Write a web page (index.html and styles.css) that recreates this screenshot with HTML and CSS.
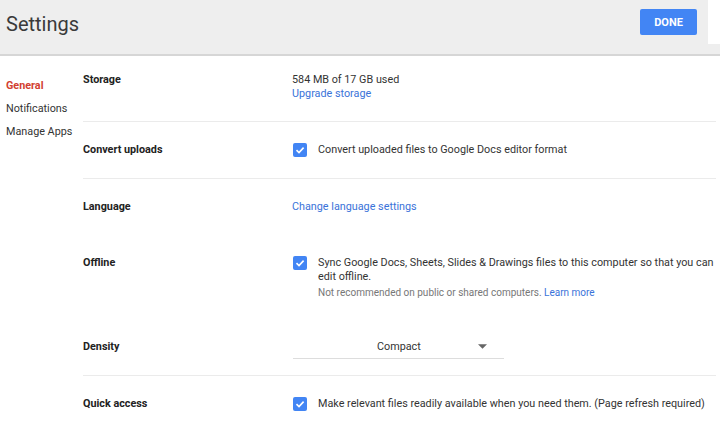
FILE: index.html
```html
<!DOCTYPE html>
<html>
<head>
<meta charset="utf-8">
<link rel="stylesheet" href="styles.css">
</head>
<body>
<header class="header">
  <h1 class="title">Settings</h1>
  <button class="done">DONE</button>
  <div class="side-block"></div>
</header>
<div class="page">
  <nav class="sidebar">
    <div class="nav-item active">General</div>
    <div class="nav-item">Notifications</div>
    <div class="nav-item">Manage Apps</div>
  </nav>
  <main class="main">
    <section class="row row-storage">
      <div class="label">Storage</div>
      <div class="value">
        <div>584 MB of 17 GB used</div>
        <a class="link">Upgrade storage</a>
      </div>
    </section>
    <section class="row row-center">
      <div class="label">Convert uploads</div>
      <div class="value check-line">
        <span class="checkbox"><svg viewBox="0 0 14 14" width="14" height="14"><path d="M3.5 7.2 L6 9.6 L10.6 4.6" fill="none" stroke="#fff" stroke-width="1.6"/></svg></span>
        <span>Convert uploaded files to Google Docs editor format</span>
      </div>
    </section>
    <section class="row row-center row-short row-noline">
      <div class="label">Language</div>
      <div class="value"><a class="link">Change language settings</a></div>
    </section>
    <section class="row row-offline row-noline">
      <div class="label">Offline</div>
      <div class="value check-line top">
        <span class="checkbox"><svg viewBox="0 0 14 14" width="14" height="14"><path d="M3.5 7.2 L6 9.6 L10.6 4.6" fill="none" stroke="#fff" stroke-width="1.6"/></svg></span>
        <div class="offline-text">
          <div>Sync Google Docs, Sheets, Slides &amp; Drawings files to this computer so that you can edit offline.</div>
          <div class="note">Not recommended on public or shared computers. <a class="link">Learn more</a></div>
        </div>
      </div>
    </section>
    <section class="row row-center">
      <div class="label">Density</div>
      <div class="value">
        <div class="select">
          <span class="select-text">Compact</span>
          <svg class="arrow" viewBox="0 0 10 5" width="9" height="5"><path d="M0 0 L10 0 L5 5 Z" fill="#666"/></svg>
        </div>
      </div>
    </section>
    <section class="row row-center row-noline">
      <div class="label">Quick access</div>
      <div class="value check-line">
        <span class="checkbox"><svg viewBox="0 0 14 14" width="14" height="14"><path d="M3.5 7.2 L6 9.6 L10.6 4.6" fill="none" stroke="#fff" stroke-width="1.6"/></svg></span>
        <span>Make relevant files readily available when you need them. (Page refresh required)</span>
      </div>
    </section>
  </main>
</div>
</body>
</html>
```
FILE: styles.css
```css
* { box-sizing: border-box; }
html, body { margin: 0; padding: 0; }
body {
  font-family: Roboto, "Liberation Sans", Arial, sans-serif;
  font-size: 10.8px;
  color: #333;
  background: #fff;
  width: 720px;
  height: 424px;
  overflow: hidden;
}
.header {
  height: 56px;
  background: #eeeeee;
  border-bottom: 2px solid #d6d6d6;
  display: flex;
  align-items: flex-start;
  padding-left: 6px;
}
.title {
  margin: 11px 0 0 0;
  font-size: 20px;
  font-weight: 400;
  color: #3a3a3a;
  line-height: 26px;
  flex: 1;
}
.done {
  margin-top: 9px;
  width: 57px;
  height: 26px;
  border: none;
  border-radius: 2px;
  background: #4285f4;
  color: #fff;
  font-family: inherit;
  font-size: 11px;
  font-weight: 700;
  padding: 0;
}
.side-block {
  width: 12px;
  height: 44px;
  background: #fff;
  margin-left: 11px;
}
.page {
  display: flex;
}
.sidebar {
  width: 83px;
  flex: none;
  padding: 23px 0 0 6px;
  display: flex;
  flex-direction: column;
  gap: 9px;
}
.nav-item {
  line-height: 14px;
  color: #333;
}
.nav-item.active {
  color: #d23f31;
  font-weight: 700;
}
.main {
  width: 633px;
  flex: none;
}
.row {
  display: flex;
  border-bottom: 1px solid #ebebeb;
}
.row-noline { border-bottom-color: transparent; }
.row-storage {
  height: 66px;
  padding-top: 17px;
  line-height: 15px;
}
.row-center {
  height: 57px;
  align-items: center;
}
.row-short { height: 56px; }
.row-offline {
  height: 84px;
  padding-top: 21px;
  align-items: flex-start;
}
.label {
  width: 209px;
  flex: none;
  font-weight: 700;
  color: #222;
  line-height: 14px;
}
.value {
  flex: 1;
  line-height: 14px;
}
.link {
  color: #3a73d9;
  text-decoration: none;
}
.check-line {
  display: flex;
  align-items: center;
  gap: 11px;
  padding-left: 1px;
}
.check-line.top { align-items: flex-start; }
.checkbox {
  width: 14px;
  height: 14px;
  border-radius: 2px;
  background: #4285f4;
  display: block;
  flex: none;
}
.checkbox svg { display: block; }
.offline-text { flex: 0 0 398px; }
.note {
  color: #777;
  font-size: 10px;
  margin-top: 2px;
}
.select {
  width: 211px;
  height: 24px;
  margin-left: 1px;
  border-bottom: 1px solid #ddd;
  display: flex;
  align-items: center;
}
.select-text {
  margin-left: 84px;
}
.arrow {
  margin-left: auto;
  margin-right: 17px;
}
```
